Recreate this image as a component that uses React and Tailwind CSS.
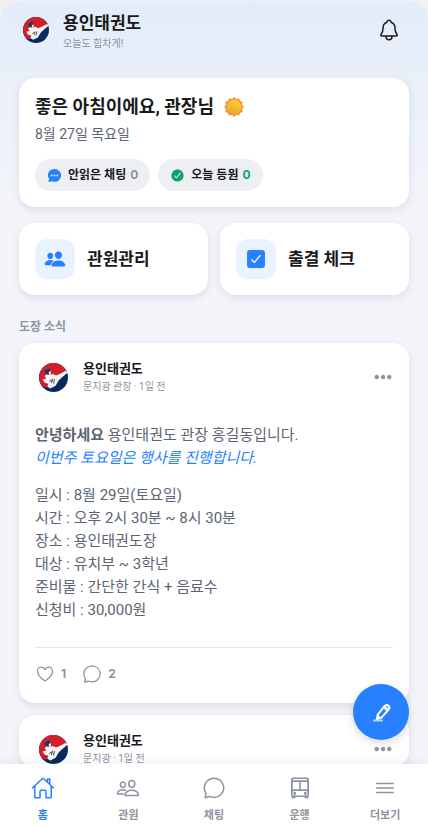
import {
    IoBusOutline,
    IoChatbubbleEllipses,
    IoChatbubbleOutline,
    IoCheckbox,
    IoCheckmarkCircle,
    IoEllipsisHorizontal,
    IoHeartOutline,
    IoHomeOutline,
    IoMenuOutline,
    IoNotificationsOutline,
    IoPeople,
    IoPeopleOutline,
} from 'react-icons/io5';

const tabs = [
    { label: '홈', icon: IoHomeOutline, active: true },
    { label: '관원', icon: IoPeopleOutline },
    { label: '채팅', icon: IoChatbubbleOutline },
    { label: '운행', icon: IoBusOutline },
    { label: '더보기', icon: IoMenuOutline },
];

const details = [
    '일시 : 8월 29일(토요일)',
    '시간 : 오후 2시 30분 ~ 8시 30분',
    '장소 : 용인태권도장',
    '대상 : 유치부 ~ 3학년',
    '준비물 : 간단한 간식 + 음료수',
    '신청비 : 30,000원',
];

function Logo({ className }) {
    return (
        <svg viewBox="0 0 56 56" className={className} aria-hidden="true">
            <circle cx="28" cy="28" r="28" fill="#082a5c" />
            <path d="M3 40A28 28 0 0 1 48 8L54 17Q43 18 36 27Q26 42 12 48Q6 45 3 40Z" fill="#cf202b" />
            <path d="M11 25L17 20L21 23L27 21L33 24L40 21L52 15L55 19L44 28L38 34L32 44L22 49L16 46L18 40L11 38L7 32L14 30Z" fill="#f3f3f5" />
            <path d="M10 15L20 10L22 18L19 23L13 21Z" fill="#173765" />
            <path d="M19 17L23 16L23 22L19 23Z" fill="#f3f3f5" />
            <path d="M20 36L26 32L24 39M30 31L28 40" fill="none" stroke="#4b586c" strokeWidth="2" />
        </svg>
    );
}

function Sun() {
    return (
        <svg viewBox="0 0 40 40" className="size-5" aria-hidden="true">
            <defs>
                <linearGradient id="sun" x1="0.7" y1="0" x2="0.3" y2="1">
                    <stop offset="0" stopColor="#ffd233" />
                    <stop offset="1" stopColor="#e6a52e" />
                </linearGradient>
            </defs>
            <path
                d="M20 0L24 4L30 3L32 8L37 10L36 16L40 20L36 24L37 30L32 32L30 37L24 36L20 40L16 36L10 37L8 32L3 30L4 24L0 20L4 16L3 10L8 8L10 3L16 4Z"
                fill="#f78b37"
            />
            <circle cx="20" cy="20" r="15" fill="url(#sun)" />
        </svg>
    );
}

function Pencil() {
    return (
        <svg viewBox="0 0 24 24" className="size-6" fill="none" stroke="white" strokeLinejoin="round" aria-hidden="true">
            <path d="M4 20.5H14" strokeWidth="2" opacity="0.65" />
            <path d="M8 19L8.6 14.8L15.3 6.3Q17.3 4 19.4 5.7Q21.4 7.4 19.6 9.6L12.4 17.6Z" strokeWidth="2" />
            <path d="M14.8 6.7L19 10.3" strokeWidth="3" />
            <path d="M8 19.5L9 15.5L11.5 17.5Z" fill="white" strokeWidth="1" />
        </svg>
    );
}

function StatPill({ icon: Icon, iconClass, label, count, countClass }) {
    return (
        <button type="button" className="flex h-8 items-center rounded-full bg-[#edeff3] px-3 text-xs font-bold text-[#191a1c]">
            <Icon className={`mr-1.5 size-[15px] ${iconClass}`} />
            {label}
            <span className={`ml-1 font-[Inter,sans-serif] ${countClass}`}>{count}</span>
        </button>
    );
}

function QuickLink({ icon: Icon, label }) {
    return (
        <a href="#" className="flex flex-1 items-center gap-3 rounded-2xl bg-white p-4 shadow-[0_3px_10px_rgba(0,0,0,0.09)]">
            <span className="flex size-10 items-center justify-center rounded-xl bg-[#ebf2ff]">
                <Icon className="size-[22px] text-[#2680ff]" />
            </span>
            <span className="text-[17px] leading-6 font-bold text-[#191a1c]">{label}</span>
        </a>
    );
}

function Post({ author, children }) {
    return (
        <article className="rounded-2xl bg-white px-4 shadow-[0_3px_10px_rgba(0,0,0,0.09)]">
            <header className="flex items-center pt-4 pl-1">
                <Logo className="size-[29px]" />
                <div className="ml-[15px]">
                    <h3 className="text-[13px] leading-5 font-bold text-[#191a1c]">용인태권도</h3>
                    <p className="text-[10px] leading-4 text-[#8b93a0]">{author}</p>
                </div>
                <button type="button" aria-label="게시글 메뉴" className="ml-auto">
                    <IoEllipsisHorizontal className="size-5 stroke-current stroke-[20px] text-[#8b93a0]" />
                </button>
            </header>
            {children}
        </article>
    );
}

export default function App() {
    return (
        <div className="h-screen bg-[#f1f1f2] pt-px font-[Roboto,'Noto_Sans_CJK_KR',sans-serif]">
            <div className="flex h-full flex-col overflow-hidden rounded-t-[20px] bg-[#f3f5fa] bg-linear-to-b from-[#e4ecf9] via-[#f3f5fa] via-25% to-[#f3f5fa]">
                <header className="flex items-center px-[23px] pt-2 pb-[18px]">
                    <Logo className="size-[26px]" />
                    <div className="ml-3.5">
                        <h1 className="text-[17px] leading-7 font-bold text-[#191a1c]">용인태권도</h1>
                        <p className="text-[10px] leading-[14px] text-[#8b93a0]">오늘도 힘차게!</p>
                    </div>
                    <button type="button" aria-label="알림" className="ml-auto pr-1">
                        <IoNotificationsOutline className="size-6 text-[#191a1c]" />
                    </button>
                </header>

                <main className="min-h-0 flex-1 overflow-y-auto px-[19px] pt-[9px] [scrollbar-width:none]">
                    <section className="rounded-2xl bg-white p-4 shadow-[0_3px_10px_rgba(0,0,0,0.09)]">
                        <h2 className="flex items-center gap-2.5 text-[18px] leading-[26px] font-bold text-[#191a1c]">
                            좋은 아침이에요, 관장님 <Sun />
                        </h2>
                        <p className="mt-1 text-sm leading-5 text-[#5c6573]">8월 27일 목요일</p>
                        <div className="mt-[15px] flex gap-2">
                            <StatPill icon={IoChatbubbleEllipses} iconClass="text-[#2680ff]" label="안읽은 채팅" count={0} countClass="text-[#8b93a0]" />
                            <StatPill icon={IoCheckmarkCircle} iconClass="text-[#0da26b]" label="오늘 등원" count={0} countClass="text-[#0da26b]" />
                        </div>
                    </section>

                    <nav className="mt-4 flex gap-3">
                        <QuickLink icon={IoPeople} label="관원관리" />
                        <QuickLink icon={IoCheckbox} label="출결 체크" />
                    </nav>

                    <h2 className="mt-6 mb-2 text-xs leading-4 font-bold text-[#8b93a0]">도장 소식</h2>

                    <div className="flex flex-col gap-3">
                        <Post author="문지광 관장 · 1일 전">
                            <div className="pt-[29px] text-[15px] leading-[23px] text-[#5c6573]">
                                <p>
                                    <strong>안녕하세요</strong> 용인태권도 관장 홍길동입니다.
                                </p>
                                <p className="text-[#2680ff] italic">이번주 토요일은 행사를 진행합니다.</p>
                                <ul className="mt-[14px]">
                                    {details.map((line) => (
                                        <li key={line}>{line}</li>
                                    ))}
                                </ul>
                            </div>
                            <footer className="mt-[25px] flex gap-4 border-t border-[#e3e6eb] pt-4 pb-[19px] font-[Inter,sans-serif] text-xs leading-5 font-bold text-[#8b93a0]">
                                <button type="button" aria-label="좋아요 1" className="flex items-center gap-1.5">
                                    <IoHeartOutline className="size-5" />1
                                </button>
                                <button type="button" aria-label="댓글 2" className="flex items-center gap-1.5">
                                    <IoChatbubbleOutline className="size-5" />2
                                </button>
                            </footer>
                        </Post>
                        <Post author="문지광 · 1일 전" />
                    </div>
                </main>

                <nav className="relative flex h-[62px] shrink-0 bg-white shadow-[0_-2px_10px_rgba(0,0,0,0.06)]">
                    <button
                        type="button"
                        aria-label="글쓰기"
                        className="absolute right-[19px] bottom-full mb-6 flex size-14 items-center justify-center rounded-full bg-[#2680ff] shadow-[0_3px_10px_rgba(0,0,0,0.15)]"
                    >
                        <Pencil />
                    </button>
                    {tabs.map(({ label, icon: Icon, active }) => (
                        <a
                            key={label}
                            href="#"
                            className={`flex flex-1 flex-col items-center gap-2 pt-3 text-[11px] leading-4 font-bold ${active ? 'text-[#2680ff]' : 'text-[#8b93a0]'}`}
                        >
                            <Icon className="size-6" />
                            {label}
                        </a>
                    ))}
                </nav>
            </div>
        </div>
    );
}
